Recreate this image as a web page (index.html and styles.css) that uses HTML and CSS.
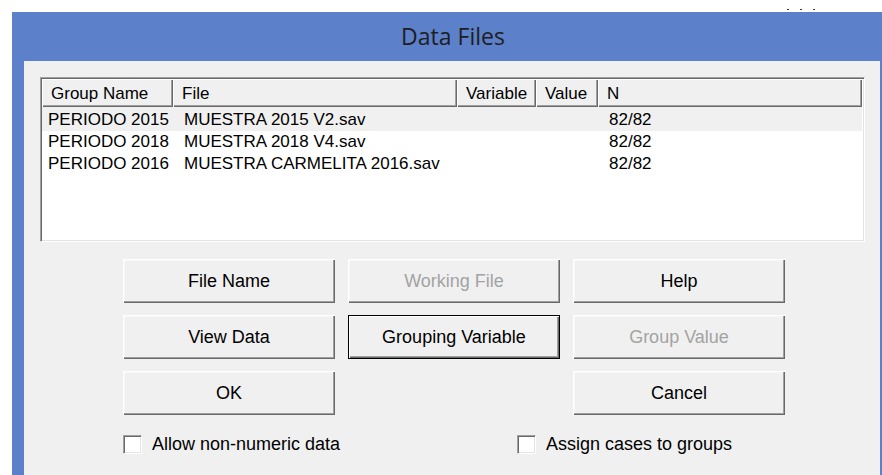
FILE: index.html
```html
<!DOCTYPE html>
<html lang="en">
<head>
<meta charset="utf-8">
<title>Data Files</title>
<link rel="stylesheet" href="styles.css">
</head>
<body>
  <div class="strip">
    <span class="dot"></span><span class="dot"></span><span class="dot"></span>
  </div>
  <div class="window">
    <div class="titlebar">Data Files</div>
    <div class="client">
      <div class="listview">
        <div class="lv-head">
          <div class="hcell">Group Name</div>
          <div class="hcell">File</div>
          <div class="hcell">Variable</div>
          <div class="hcell">Value</div>
          <div class="hcell">N</div>
        </div>
        <div class="lv-body">
          <div class="lv-row selected">
            <div class="cell first">PERIODO 2015</div>
            <div class="cell">MUESTRA 2015 V2.sav</div>
            <div class="cell"></div>
            <div class="cell"></div>
            <div class="cell">82/82</div>
          </div>
          <div class="lv-row">
            <div class="cell first">PERIODO 2018</div>
            <div class="cell">MUESTRA 2018 V4.sav</div>
            <div class="cell"></div>
            <div class="cell"></div>
            <div class="cell">82/82</div>
          </div>
          <div class="lv-row">
            <div class="cell first">PERIODO 2016</div>
            <div class="cell">MUESTRA CARMELITA 2016.sav</div>
            <div class="cell"></div>
            <div class="cell"></div>
            <div class="cell">82/82</div>
          </div>
        </div>
      </div>

      <div class="buttons">
        <button class="btn">File Name</button>
        <button class="btn" disabled>Working File</button>
        <button class="btn">Help</button>
        <button class="btn">View Data</button>
        <button class="btn default">Grouping Variable</button>
        <button class="btn" disabled>Group Value</button>
        <button class="btn">OK</button>
        <span class="spacer"></span>
        <button class="btn">Cancel</button>
      </div>

      <div class="checks">
        <label class="check first-check"><span class="box"></span>Allow non-numeric data</label>
        <label class="check"><span class="box"></span>Assign cases to groups</label>
      </div>
    </div>
  </div>
</body>
</html>
```

FILE: styles.css
```css
html, body {
  margin: 0;
  padding: 0;
  background: #ffffff;
  width: 882px;
  height: 475px;
  overflow: hidden;
  font-family: "Liberation Sans", Arial, sans-serif;
  color: #000;
}

/* thin white strip above the window frame */
.strip {
  height: 12px;
  display: flex;
  align-items: flex-end;
  gap: 11px;
  padding-left: 787px;
  box-sizing: border-box;
  padding-bottom: 2px;
}
.dot {
  width: 2px;
  height: 1px;
  background: #3a3a3a;
}

.window {
  margin-left: 12px;
  height: 463px;
  background: #5c80c9;
  display: flex;
  flex-direction: column;
}

.titlebar {
  height: 49px;
  display: flex;
  align-items: center;
  justify-content: center;
  font-family: "Open Sans", "Liberation Sans", sans-serif;
  font-size: 23px;
  color: #1e1e1e;
  padding-left: 12px;
  padding-bottom: 2px;
  box-sizing: border-box;
}

.client {
  flex: 1;
  margin-left: 12px;
  margin-right: 2px;
  background: #f0f0f0;
  padding: 16px 0 0 16px;
}

/* list view */
.listview {
  width: 825px;
  height: 165px;
  box-sizing: border-box;
  background: #ffffff;
  border-top: 1px solid #a0a0a0;
  border-left: 1px solid #a0a0a0;
  border-right: 1px solid #ffffff;
  border-bottom: 1px solid #ffffff;
  box-shadow: inset 1px 1px 0 #696969, inset -1px -1px 0 #e3e3e3;
  padding: 1px 2px 2px 1px;
}

.lv-head,
.lv-row {
  display: grid;
  grid-template-columns: 131px 284px 79px 62px 1fr;
}

.lv-head {
  height: 28px;
  font-size: 17px;
}
.hcell {
  background: #f0f0f0;
  border-left: 1px solid #ffffff;
  border-top: 1px solid #ffffff;
  box-shadow: inset -1px -1px 0 #696969, inset -2px -2px 0 #a0a0a0;
  padding-left: 8px;
  display: flex;
  align-items: center;
  white-space: nowrap;
  overflow: hidden;
}

.lv-body {
  font-size: 17px;
}
.lv-row {
  height: 22px;
  line-height: 22px;
}
.lv-row.selected {
  background: #f0f0f0;
  height: 24px;
  padding-top: 2px;
  box-sizing: border-box;
}
.cell {
  padding-left: 11px;
  white-space: nowrap;
}
.cell.first {
  padding-left: 6px;
}

/* push buttons */
.buttons {
  margin: 17px 0 0 83px;
  display: grid;
  grid-template-columns: repeat(3, 212px);
  grid-auto-rows: 44px;
  column-gap: 13px;
  row-gap: 12px;
}
.btn {
  font-family: "Liberation Sans", Arial, sans-serif;
  font-size: 18px;
  color: #000;
  background: #f0f0f0;
  border: none;
  margin: 0;
  padding: 0;
  box-shadow: inset 1px 1px 0 #ffffff, inset -1px -1px 0 #696969, inset -2px -2px 0 #a0a0a0, inset 2px 2px 0 #f7f7f7;
}
.btn:disabled {
  color: #a3a3a3;
}
.btn.default {
  border: 1px solid #000;
  box-shadow: inset 1px 1px 0 #ffffff, inset -1px -1px 0 #696969, inset -2px -2px 0 #a0a0a0;
}

/* check boxes */
.checks {
  margin: 19px 0 0 83px;
  display: flex;
  font-size: 18px;
}
.check {
  display: flex;
  align-items: center;
  gap: 10px;
  height: 20px;
}
.first-check {
  width: 394px;
}
.box {
  width: 19px;
  height: 19px;
  box-sizing: border-box;
  background: #ffffff;
  border-top: 1px solid #a0a0a0;
  border-left: 1px solid #a0a0a0;
  border-right: 1px solid #ffffff;
  border-bottom: 1px solid #ffffff;
  box-shadow: inset 1px 1px 0 #696969, inset -1px -1px 0 #e3e3e3;
}
```
